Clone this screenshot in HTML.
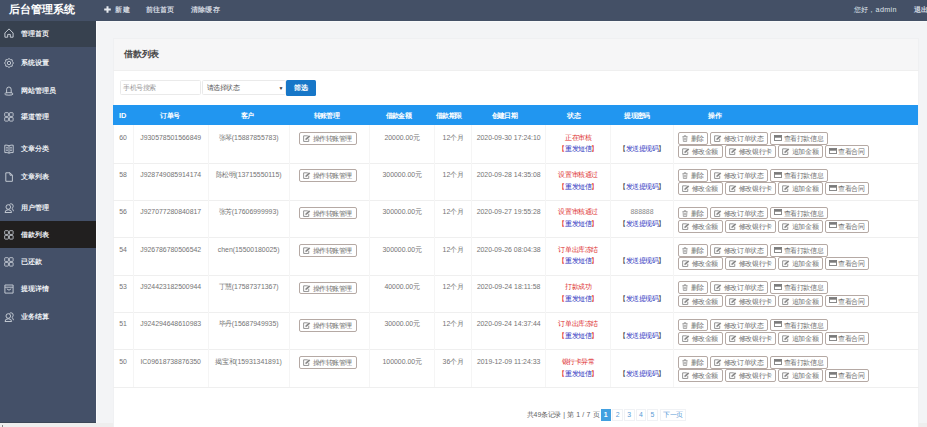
<!DOCTYPE html>
<html><head><meta charset="utf-8">
<style>
*{box-sizing:border-box;margin:0;padding:0}
html,body{width:927px;height:427px;overflow:hidden;background:#f3f4f6;font-family:"Liberation Sans",sans-serif;color:#666}
i{font-style:normal}
.a{position:absolute;white-space:nowrap}
#hd{position:absolute;left:0;top:0;width:927px;height:20.5px;background:#445066}
#title{left:9px;top:2.5px;font-size:11px;font-weight:bold;color:#fff;line-height:13px}
#title i{letter-spacing:-0.1px}
.hm{top:5.3px;font-size:7.2px;line-height:9px;color:#d3d8e0;font-weight:700}
.hm i{letter-spacing:0.2px}
#sb{position:absolute;left:0;top:20.5px;width:96px;height:402px;background:#445068}
.si{position:absolute;left:0;width:96px;height:26px}
.si .t{position:absolute;left:21px;font-size:7px;line-height:9px;color:#eef0f4;top:8.5px;font-weight:700;white-space:nowrap}
.si svg{position:absolute;left:4.4px;top:8.5px}
#bot{position:absolute;left:0;top:422.5px;width:927px;height:5px;background:#eeeeee}
#cline{position:absolute;left:96px;top:20.5px;width:1px;height:402px;background:#fbfbfc}
#tline{position:absolute;left:96px;top:20.5px;width:831px;height:1px;background:#f8f9fa}
#panel{position:absolute;left:112.8px;top:37.8px;width:806.6px;height:390px;background:#fff;border:1px solid #f0f1f3}
#ph{position:absolute;left:112.8px;top:37.8px;width:806.6px;height:33.6px;background:#f6f6f7;border:1px solid #eff0f2;border-bottom:1px solid #efefef}
#ptitle{left:124px;top:48.6px;font-size:8.8px;font-weight:bold;color:#444;line-height:11px}
.ls i{letter-spacing:-0.45px}

#ptitle i{letter-spacing:-0.2px}
.inp{position:absolute;background:#fff;border:1px solid #eaeaea;border-radius:1.5px}
#btn{position:absolute;left:286.2px;top:80.2px;width:29.4px;height:15.6px;background:#1777c8;border-radius:1.5px;color:#fff;font-weight:bold;font-size:6.8px;line-height:15.6px;text-align:center}
#btn i{letter-spacing:-0.3px}
#th{position:absolute;left:113px;top:105.2px;width:805.4px;height:19.8px;background:#2196f0}
.thx{top:110.5px;font-size:6.6px;line-height:9px;color:#fff;font-weight:bold}
.thx i{letter-spacing:-0.6px}
.rl{position:absolute;left:113px;width:806px;height:1px;background:#efefef}
.vl{position:absolute;top:125.2px;width:1px;height:261.6px;background:#f5f5f5}
.c{position:absolute;font-size:6.9px;line-height:10.8px;text-align:center;color:#747474;white-space:nowrap;font-weight:500}
.c i{letter-spacing:-0.45px}
.b1{position:absolute;height:12.6px;border:1px solid #b5a9a4;border-radius:2px;background:#fff;font-size:6.9px;line-height:11.2px;color:#707070;white-space:nowrap;padding-left:3px;font-weight:500}
.b1 i{letter-spacing:-0.45px}
.b1 svg{vertical-align:-1px;margin-right:1.5px}
.red{color:#dd2c2c}.blue{color:#2d34c0}.blk{color:#444}
#pg{left:527px;top:409.5px;font-size:6.9px;line-height:9px;color:#5e5e5e;word-spacing:0.4px}
#pg i{letter-spacing:-0.45px}
.pb{position:absolute;top:408.6px;height:12.2px;border:1px solid #f0f2f5;font-size:6.9px;line-height:10.2px;text-align:center;color:#5a9bd5}
.pb i{letter-spacing:-0.45px}
</style></head><body>
<div id="hd"></div>
<div class="a" id="title"><i>后台管理系统</i></div>
<div class="a hm" style="left:104px"><svg style="position:absolute;left:0.4px;top:0.9px" width="7" height="7" viewBox="0 0 7 7"><path d="M2.5 0.2 H4.5 V2.5 H6.8 V4.5 H4.5 V6.8 H2.5 V4.5 H0.2 V2.5 H2.5 Z" fill="#e6e9ee"/></svg><span style="margin-left:11.4px"><i>新建</i></span></div>
<div class="a hm" style="left:145.5px"><i>前往首页</i></div>
<div class="a hm" style="left:191px"><i>清除缓存</i></div>
<div class="a hm" style="left:854px;top:5px;font-weight:500;color:#dfe3ea"><i>您好，</i><span style="letter-spacing:0.3px;font-weight:400">admin</span></div>
<div class="a hm" style="left:914px;top:5.3px"><i>退出</i></div>
<div id="sb">
<div class="si" style="top:0px;height:26px;background:#37414f"><svg style="top:7px;left:4.3px" width="10" height="10" viewBox="0 0 10 10" fill="none" stroke="#d5dae2" stroke-width="0.9" stroke-linejoin="round"><path d="M0.9 5 L5 0.9 L9.1 5 V9.2 H6.3 V6.4 H3.7 V9.2 H0.9 Z"/></svg><span class="t"><i>管理首页</i></span></div>
<div class="si" style="top:29px;height:26px"><svg width="10" height="10" viewBox="0 0 10 10" fill="none" stroke="#d5dae2" stroke-width="0.85" stroke-linejoin="round"><path d="M5 0.5 L6.4 1.6 L8.2 1.8 L8.4 3.6 L9.5 5 L8.4 6.4 L8.2 8.2 L6.4 8.4 L5 9.5 L3.6 8.4 L1.8 8.2 L1.6 6.4 L0.5 5 L1.6 3.6 L1.8 1.8 L3.6 1.6 Z"/><circle cx="5" cy="5" r="1.7"/></svg><span class="t"><i>系统设置</i></span></div>
<div class="si" style="top:56.6px;height:26px"><svg width="10" height="10" viewBox="0 0 10 10" fill="none" stroke="#d5dae2" stroke-width="0.85"><path d="M2.6 6.9 V3.6 Q2.6 1 4.9 1 Q7.2 1 7.2 3.6 V6.9"/><ellipse cx="4.9" cy="7.9" rx="4.2" ry="1.3"/></svg><span class="t"><i>网站管理员</i></span></div>
<div class="si" style="top:83px;height:26px"><svg width="10" height="10" viewBox="0 0 10 10" fill="none" stroke="#d5dae2" stroke-width="0.8"><rect x="0.7" y="0.7" width="3.7" height="3.7" rx="0.6"/><rect x="5.4" y="0.7" width="3.7" height="3.7" rx="0.6"/><rect x="0.7" y="5.4" width="3.7" height="3.7" rx="0.6"/><rect x="5.4" y="5.4" width="3.7" height="3.7" rx="0.6"/></svg><span class="t"><i>渠道管理</i></span></div>
<div class="si" style="top:115px;height:26px"><svg width="10" height="10" viewBox="0 0 10 10" fill="none" stroke="#d5dae2" stroke-width="0.85" stroke-linejoin="round"><path d="M5 1.8 Q3 0.8 0.8 1.2 V8.6 Q3 8.2 5 9.2 Q7 8.2 9.2 8.6 V1.2 Q7 0.8 5 1.8 Z M5 1.8 V9.2 M2.2 3.4 H3.8 M2.2 5 H3.8 M2.2 6.6 H3.8 M6.2 3.4 H7.8 M6.2 5 H7.8 M6.2 6.6 H7.8"/></svg><span class="t"><i>文章分类</i></span></div>
<div class="si" style="top:142.8px;height:26px"><svg width="10" height="10" viewBox="0 0 10 10" fill="none" stroke="#d5dae2" stroke-width="0.85" stroke-linejoin="round"><path d="M1.8 0.8 H6 L8.4 3.2 V9.3 H1.8 Z M6 0.8 V3.2 H8.4"/></svg><span class="t"><i>文章列表</i></span></div>
<div class="si" style="top:174.2px;height:26px"><svg width="10" height="10" viewBox="0 0 10 10" fill="none" stroke="#d5dae2" stroke-width="0.85"><circle cx="4.3" cy="4" r="2.3"/><path d="M1 9.5 Q1 6.8 4.3 6.8 Q7.6 6.8 7.6 9.5 Z M5.6 1.4 Q6.2 0.8 7.1 0.8 Q9.2 0.9 9.2 3.2 Q9.2 4.8 7.8 5.5 Q9.4 6.2 9.4 8.2"/></svg><span class="t"><i>用户管理</i></span></div>
<div class="si" style="top:200.9px;height:26.6px;background:#211f1f"><svg width="10" height="10" viewBox="0 0 10 10" fill="none" stroke="#d5dae2" stroke-width="0.8"><rect x="0.7" y="0.7" width="3.7" height="3.7" rx="0.6"/><rect x="5.4" y="0.7" width="3.7" height="3.7" rx="0.6"/><rect x="0.7" y="5.4" width="3.7" height="3.7" rx="0.6"/><rect x="5.4" y="5.4" width="3.7" height="3.7" rx="0.6"/></svg><span class="t"><i>借款列表</i></span></div>
<div class="si" style="top:228px;height:26px"><svg width="10" height="10" viewBox="0 0 10 10" fill="none" stroke="#d5dae2" stroke-width="0.8"><rect x="0.7" y="0.7" width="3.7" height="3.7" rx="0.6"/><rect x="5.4" y="0.7" width="3.7" height="3.7" rx="0.6"/><rect x="0.7" y="5.4" width="3.7" height="3.7" rx="0.6"/><rect x="5.4" y="5.4" width="3.7" height="3.7" rx="0.6"/></svg><span class="t"><i>已还款</i></span></div>
<div class="si" style="top:255px;height:26px"><svg width="10" height="10" viewBox="0 0 10 10" fill="none" stroke="#d5dae2" stroke-width="0.85"><path d="M0.9 1 H9.1 V9.1 H0.9 Z M0.9 3.2 H9.1 M2.8 4.8 Q5 7.6 7.2 4.8"/></svg><span class="t"><i>提现详情</i></span></div>
<div class="si" style="top:283px;height:26px"><svg width="10" height="10" viewBox="0 0 10 10" fill="none" stroke="#d5dae2" stroke-width="0.85"><circle cx="4.3" cy="4" r="2.3"/><path d="M1 9.5 Q1 6.8 4.3 6.8 Q7.6 6.8 7.6 9.5 Z M5.6 1.4 Q6.2 0.8 7.1 0.8 Q9.2 0.9 9.2 3.2 Q9.2 4.8 7.8 5.5 Q9.4 6.2 9.4 8.2"/></svg><span class="t"><i>业务结算</i></span></div>
</div>
<div id="tline"></div><div id="cline"></div><div id="bot"></div><div style="position:absolute;left:2px;top:425px;width:1.2px;height:2px;background:#8a8a8a"></div><div style="position:absolute;left:0;top:421.8px;width:96px;height:0.8px;background:#3b4656"></div>
<div id="panel"></div><div id="ph"></div>
<div class="a" id="ptitle"><i>借款列表</i></div>
<div class="inp" style="left:120.2px;top:80.3px;width:81.3px;height:14.4px"></div>
<div class="a ls" style="left:123px;top:83.2px;font-size:6.9px;line-height:9px;color:#9a9a9a;font-weight:500"><i>手机号搜索</i></div>
<div class="inp" style="left:201.5px;top:80.3px;width:84.4px;height:14.4px"></div>
<div class="a ls" style="left:206.5px;top:83.2px;font-size:6.9px;line-height:9px;color:#555;font-weight:500"><i>请选择状态</i></div>
<div class="a" style="left:278.6px;top:83.5px;font-size:5px;line-height:8px;color:#333">▼</div>
<div id="btn"><i>筛选</i></div>
<div id="th"></div>
<div class="a thx" style="left:119px"><span style="font-size:7.4px">ID</span></div>
<div class="a thx" style="left:160.2px"><i>订单号</i></div>
<div class="a thx" style="left:240.7px"><i>客户</i></div>
<div class="a thx" style="left:313.6px"><i>转账管理</i></div>
<div class="a thx" style="left:385.7px"><i>借款金额</i></div>
<div class="a thx" style="left:436px"><i>借款期限</i></div>
<div class="a thx" style="left:491.5px"><i>创建日期</i></div>
<div class="a thx" style="left:567.3px"><i>状态</i></div>
<div class="a thx" style="left:624.2px"><i>提现密码</i></div>
<div class="a thx" style="left:708.4px"><i>操作</i></div>
<div class="rl" style="top:162.57px"></div>
<div class="c" style="left:113px;width:20.1px;top:132.50px">60</div>
<div class="c" style="left:133.1px;width:75.2px;top:132.50px">J930578501566849</div>
<div class="c" style="left:208.3px;width:80.7px;top:132.50px"><i>张琴</i>(15887855783)</div>
<div class="c" style="left:369.6px;width:65.0px;top:132.50px">20000.00<i>元</i></div>
<div class="c" style="left:434.6px;width:36.8px;top:132.50px">12<i>个月</i></div>
<div class="c" style="left:471.4px;width:74.5px;top:132.50px">2020-09-30 17:24:10</div>
<div class="b1" style="left:299.2px;top:132.10px;width:57.6px"><svg width="8" height="7" viewBox="0 0 11.4 10"><path d="M6.8 1.2 H0.9 V9.2 H8.2 V5.4" fill="none" stroke="#8a8a8a" stroke-width="1.3"/><path d="M3.3 7 L3.7 5.1 L8.6 0.4 L10.4 2.1 L5.4 6.7 Z" fill="#8a8a8a"/></svg><i>操作转账管理</i></div>
<div class="c red" style="left:545.9px;width:64.5px;top:132.50px"><i>正在审核</i></div>
<div class="c" style="left:545.9px;width:64.5px;top:144.30px"><span class="red"><i>【</i></span><span class="blue"><i>重发短信</i></span><span class="red"><i>】</i></span></div>
<div class="c" style="left:610.4px;width:63.2px;top:144.30px"><span class="blk"><i>【</i></span><span class="blue"><i>发送提现码</i></span><span class="blk"><i>】</i></span></div>
<div class="b1" style="left:678.2px;top:132.00px;width:29.8px"><svg style="margin-right:2.6px" width="6" height="7" viewBox="0 0 8 10"><path d="M0.4 2.3 H7.6 M2.9 2.3 V0.9 H5.1 V2.3 M1.2 2.3 L1.7 9.3 H6.3 L6.8 2.3 M3 4.1 V7.8 M5 4.1 V7.8" fill="none" stroke="#8a8a8a" stroke-width="1"/></svg><i>删除</i></div>
<div class="b1" style="left:710.4px;top:132.00px;width:57.4px"><svg width="8" height="7" viewBox="0 0 11.4 10"><path d="M6.8 1.2 H0.9 V9.2 H8.2 V5.4" fill="none" stroke="#8a8a8a" stroke-width="1.3"/><path d="M3.3 7 L3.7 5.1 L8.6 0.4 L10.4 2.1 L5.4 6.7 Z" fill="#8a8a8a"/></svg><i>修改订单状态</i></div>
<div class="b1" style="left:770.3px;top:132.00px;width:57.8px"><svg style="vertical-align:0.4px" width="8" height="6" viewBox="0 0 11 8"><rect x="0.6" y="0.6" width="9.8" height="6.8" fill="none" stroke="#7a7a7a" stroke-width="1.2"/><rect x="0.6" y="0.6" width="9.8" height="3" fill="#7a7a7a"/></svg><i>查看打款信息</i></div>
<div class="b1" style="left:678.2px;top:145.10px;width:44.7px;height:12.8px"><svg width="8" height="7" viewBox="0 0 11.4 10"><path d="M6.8 1.2 H0.9 V9.2 H8.2 V5.4" fill="none" stroke="#8a8a8a" stroke-width="1.3"/><path d="M3.3 7 L3.7 5.1 L8.6 0.4 L10.4 2.1 L5.4 6.7 Z" fill="#8a8a8a"/></svg><i>修改金额</i></div>
<div class="b1" style="left:725.4px;top:145.10px;width:50.2px;height:12.8px"><svg width="8" height="7" viewBox="0 0 11.4 10"><path d="M6.8 1.2 H0.9 V9.2 H8.2 V5.4" fill="none" stroke="#8a8a8a" stroke-width="1.3"/><path d="M3.3 7 L3.7 5.1 L8.6 0.4 L10.4 2.1 L5.4 6.7 Z" fill="#8a8a8a"/></svg><i>修改银行卡</i></div>
<div class="b1" style="left:778.4px;top:145.10px;width:44.6px;height:12.8px"><svg width="8" height="7" viewBox="0 0 11.4 10"><path d="M6.8 1.2 H0.9 V9.2 H8.2 V5.4" fill="none" stroke="#8a8a8a" stroke-width="1.3"/><path d="M3.3 7 L3.7 5.1 L8.6 0.4 L10.4 2.1 L5.4 6.7 Z" fill="#8a8a8a"/></svg><i>追加金额</i></div>
<div class="b1" style="left:824.9px;top:145.10px;width:43.7px;height:12.8px"><svg style="vertical-align:0.4px" width="8" height="6" viewBox="0 0 11 8"><rect x="0.6" y="0.6" width="9.8" height="6.8" fill="none" stroke="#7a7a7a" stroke-width="1.2"/><rect x="0.6" y="0.6" width="9.8" height="3" fill="#7a7a7a"/></svg><i>查看合同</i></div>
<div class="rl" style="top:199.94px"></div>
<div class="c" style="left:113px;width:20.1px;top:169.87px">58</div>
<div class="c" style="left:133.1px;width:75.2px;top:169.87px">J928749085914174</div>
<div class="c" style="left:208.3px;width:80.7px;top:169.87px"><i>陈松明</i>(13715550115)</div>
<div class="c" style="left:369.6px;width:65.0px;top:169.87px">300000.00<i>元</i></div>
<div class="c" style="left:434.6px;width:36.8px;top:169.87px">12<i>个月</i></div>
<div class="c" style="left:471.4px;width:74.5px;top:169.87px">2020-09-28 14:35:08</div>
<div class="b1" style="left:299.2px;top:169.47px;width:57.6px"><svg width="8" height="7" viewBox="0 0 11.4 10"><path d="M6.8 1.2 H0.9 V9.2 H8.2 V5.4" fill="none" stroke="#8a8a8a" stroke-width="1.3"/><path d="M3.3 7 L3.7 5.1 L8.6 0.4 L10.4 2.1 L5.4 6.7 Z" fill="#8a8a8a"/></svg><i>操作转账管理</i></div>
<div class="c red" style="left:545.9px;width:64.5px;top:169.87px"><i>设置审核通过</i></div>
<div class="c" style="left:545.9px;width:64.5px;top:181.67px"><span class="red"><i>【</i></span><span class="blue"><i>重发短信</i></span><span class="red"><i>】</i></span></div>
<div class="c" style="left:610.4px;width:63.2px;top:181.67px"><span class="blk"><i>【</i></span><span class="blue"><i>发送提现码</i></span><span class="blk"><i>】</i></span></div>
<div class="b1" style="left:678.2px;top:169.37px;width:29.8px"><svg style="margin-right:2.6px" width="6" height="7" viewBox="0 0 8 10"><path d="M0.4 2.3 H7.6 M2.9 2.3 V0.9 H5.1 V2.3 M1.2 2.3 L1.7 9.3 H6.3 L6.8 2.3 M3 4.1 V7.8 M5 4.1 V7.8" fill="none" stroke="#8a8a8a" stroke-width="1"/></svg><i>删除</i></div>
<div class="b1" style="left:710.4px;top:169.37px;width:57.4px"><svg width="8" height="7" viewBox="0 0 11.4 10"><path d="M6.8 1.2 H0.9 V9.2 H8.2 V5.4" fill="none" stroke="#8a8a8a" stroke-width="1.3"/><path d="M3.3 7 L3.7 5.1 L8.6 0.4 L10.4 2.1 L5.4 6.7 Z" fill="#8a8a8a"/></svg><i>修改订单状态</i></div>
<div class="b1" style="left:770.3px;top:169.37px;width:57.8px"><svg style="vertical-align:0.4px" width="8" height="6" viewBox="0 0 11 8"><rect x="0.6" y="0.6" width="9.8" height="6.8" fill="none" stroke="#7a7a7a" stroke-width="1.2"/><rect x="0.6" y="0.6" width="9.8" height="3" fill="#7a7a7a"/></svg><i>查看打款信息</i></div>
<div class="b1" style="left:678.2px;top:182.47px;width:44.7px;height:12.8px"><svg width="8" height="7" viewBox="0 0 11.4 10"><path d="M6.8 1.2 H0.9 V9.2 H8.2 V5.4" fill="none" stroke="#8a8a8a" stroke-width="1.3"/><path d="M3.3 7 L3.7 5.1 L8.6 0.4 L10.4 2.1 L5.4 6.7 Z" fill="#8a8a8a"/></svg><i>修改金额</i></div>
<div class="b1" style="left:725.4px;top:182.47px;width:50.2px;height:12.8px"><svg width="8" height="7" viewBox="0 0 11.4 10"><path d="M6.8 1.2 H0.9 V9.2 H8.2 V5.4" fill="none" stroke="#8a8a8a" stroke-width="1.3"/><path d="M3.3 7 L3.7 5.1 L8.6 0.4 L10.4 2.1 L5.4 6.7 Z" fill="#8a8a8a"/></svg><i>修改银行卡</i></div>
<div class="b1" style="left:778.4px;top:182.47px;width:44.6px;height:12.8px"><svg width="8" height="7" viewBox="0 0 11.4 10"><path d="M6.8 1.2 H0.9 V9.2 H8.2 V5.4" fill="none" stroke="#8a8a8a" stroke-width="1.3"/><path d="M3.3 7 L3.7 5.1 L8.6 0.4 L10.4 2.1 L5.4 6.7 Z" fill="#8a8a8a"/></svg><i>追加金额</i></div>
<div class="b1" style="left:824.9px;top:182.47px;width:43.7px;height:12.8px"><svg style="vertical-align:0.4px" width="8" height="6" viewBox="0 0 11 8"><rect x="0.6" y="0.6" width="9.8" height="6.8" fill="none" stroke="#7a7a7a" stroke-width="1.2"/><rect x="0.6" y="0.6" width="9.8" height="3" fill="#7a7a7a"/></svg><i>查看合同</i></div>
<div class="rl" style="top:237.31px"></div>
<div class="c" style="left:113px;width:20.1px;top:207.24px">56</div>
<div class="c" style="left:133.1px;width:75.2px;top:207.24px">J927077280840817</div>
<div class="c" style="left:208.3px;width:80.7px;top:207.24px"><i>张芳</i>(17606999993)</div>
<div class="c" style="left:369.6px;width:65.0px;top:207.24px">300000.00<i>元</i></div>
<div class="c" style="left:434.6px;width:36.8px;top:207.24px">12<i>个月</i></div>
<div class="c" style="left:471.4px;width:74.5px;top:207.24px">2020-09-27 19:55:28</div>
<div class="b1" style="left:299.2px;top:206.84px;width:57.6px"><svg width="8" height="7" viewBox="0 0 11.4 10"><path d="M6.8 1.2 H0.9 V9.2 H8.2 V5.4" fill="none" stroke="#8a8a8a" stroke-width="1.3"/><path d="M3.3 7 L3.7 5.1 L8.6 0.4 L10.4 2.1 L5.4 6.7 Z" fill="#8a8a8a"/></svg><i>操作转账管理</i></div>
<div class="c red" style="left:545.9px;width:64.5px;top:207.24px"><i>设置审核通过</i></div>
<div class="c" style="left:545.9px;width:64.5px;top:219.04px"><span class="red"><i>【</i></span><span class="blue"><i>重发短信</i></span><span class="red"><i>】</i></span></div>
<div class="c" style="left:610.4px;width:63.2px;top:207.24px;color:#888">888888</div>
<div class="c" style="left:610.4px;width:63.2px;top:219.04px"><span class="blk"><i>【</i></span><span class="blue"><i>发送提现码</i></span><span class="blk"><i>】</i></span></div>
<div class="b1" style="left:678.2px;top:206.74px;width:29.8px"><svg style="margin-right:2.6px" width="6" height="7" viewBox="0 0 8 10"><path d="M0.4 2.3 H7.6 M2.9 2.3 V0.9 H5.1 V2.3 M1.2 2.3 L1.7 9.3 H6.3 L6.8 2.3 M3 4.1 V7.8 M5 4.1 V7.8" fill="none" stroke="#8a8a8a" stroke-width="1"/></svg><i>删除</i></div>
<div class="b1" style="left:710.4px;top:206.74px;width:57.4px"><svg width="8" height="7" viewBox="0 0 11.4 10"><path d="M6.8 1.2 H0.9 V9.2 H8.2 V5.4" fill="none" stroke="#8a8a8a" stroke-width="1.3"/><path d="M3.3 7 L3.7 5.1 L8.6 0.4 L10.4 2.1 L5.4 6.7 Z" fill="#8a8a8a"/></svg><i>修改订单状态</i></div>
<div class="b1" style="left:770.3px;top:206.74px;width:57.8px"><svg style="vertical-align:0.4px" width="8" height="6" viewBox="0 0 11 8"><rect x="0.6" y="0.6" width="9.8" height="6.8" fill="none" stroke="#7a7a7a" stroke-width="1.2"/><rect x="0.6" y="0.6" width="9.8" height="3" fill="#7a7a7a"/></svg><i>查看打款信息</i></div>
<div class="b1" style="left:678.2px;top:219.84px;width:44.7px;height:12.8px"><svg width="8" height="7" viewBox="0 0 11.4 10"><path d="M6.8 1.2 H0.9 V9.2 H8.2 V5.4" fill="none" stroke="#8a8a8a" stroke-width="1.3"/><path d="M3.3 7 L3.7 5.1 L8.6 0.4 L10.4 2.1 L5.4 6.7 Z" fill="#8a8a8a"/></svg><i>修改金额</i></div>
<div class="b1" style="left:725.4px;top:219.84px;width:50.2px;height:12.8px"><svg width="8" height="7" viewBox="0 0 11.4 10"><path d="M6.8 1.2 H0.9 V9.2 H8.2 V5.4" fill="none" stroke="#8a8a8a" stroke-width="1.3"/><path d="M3.3 7 L3.7 5.1 L8.6 0.4 L10.4 2.1 L5.4 6.7 Z" fill="#8a8a8a"/></svg><i>修改银行卡</i></div>
<div class="b1" style="left:778.4px;top:219.84px;width:44.6px;height:12.8px"><svg width="8" height="7" viewBox="0 0 11.4 10"><path d="M6.8 1.2 H0.9 V9.2 H8.2 V5.4" fill="none" stroke="#8a8a8a" stroke-width="1.3"/><path d="M3.3 7 L3.7 5.1 L8.6 0.4 L10.4 2.1 L5.4 6.7 Z" fill="#8a8a8a"/></svg><i>追加金额</i></div>
<div class="b1" style="left:824.9px;top:219.84px;width:43.7px;height:12.8px"><svg style="vertical-align:0.4px" width="8" height="6" viewBox="0 0 11 8"><rect x="0.6" y="0.6" width="9.8" height="6.8" fill="none" stroke="#7a7a7a" stroke-width="1.2"/><rect x="0.6" y="0.6" width="9.8" height="3" fill="#7a7a7a"/></svg><i>查看合同</i></div>
<div class="rl" style="top:274.68px"></div>
<div class="c" style="left:113px;width:20.1px;top:244.61px">54</div>
<div class="c" style="left:133.1px;width:75.2px;top:244.61px">J926786780506542</div>
<div class="c" style="left:208.3px;width:80.7px;top:244.61px">chen(15500180025)</div>
<div class="c" style="left:369.6px;width:65.0px;top:244.61px">300000.00<i>元</i></div>
<div class="c" style="left:434.6px;width:36.8px;top:244.61px">12<i>个月</i></div>
<div class="c" style="left:471.4px;width:74.5px;top:244.61px">2020-09-26 08:04:38</div>
<div class="b1" style="left:299.2px;top:244.21px;width:57.6px"><svg width="8" height="7" viewBox="0 0 11.4 10"><path d="M6.8 1.2 H0.9 V9.2 H8.2 V5.4" fill="none" stroke="#8a8a8a" stroke-width="1.3"/><path d="M3.3 7 L3.7 5.1 L8.6 0.4 L10.4 2.1 L5.4 6.7 Z" fill="#8a8a8a"/></svg><i>操作转账管理</i></div>
<div class="c red" style="left:545.9px;width:64.5px;top:244.61px"><i>订单出库冻结</i></div>
<div class="c" style="left:545.9px;width:64.5px;top:256.41px"><span class="red"><i>【</i></span><span class="blue"><i>重发短信</i></span><span class="red"><i>】</i></span></div>
<div class="c" style="left:610.4px;width:63.2px;top:256.41px"><span class="blk"><i>【</i></span><span class="blue"><i>发送提现码</i></span><span class="blk"><i>】</i></span></div>
<div class="b1" style="left:678.2px;top:244.11px;width:29.8px"><svg style="margin-right:2.6px" width="6" height="7" viewBox="0 0 8 10"><path d="M0.4 2.3 H7.6 M2.9 2.3 V0.9 H5.1 V2.3 M1.2 2.3 L1.7 9.3 H6.3 L6.8 2.3 M3 4.1 V7.8 M5 4.1 V7.8" fill="none" stroke="#8a8a8a" stroke-width="1"/></svg><i>删除</i></div>
<div class="b1" style="left:710.4px;top:244.11px;width:57.4px"><svg width="8" height="7" viewBox="0 0 11.4 10"><path d="M6.8 1.2 H0.9 V9.2 H8.2 V5.4" fill="none" stroke="#8a8a8a" stroke-width="1.3"/><path d="M3.3 7 L3.7 5.1 L8.6 0.4 L10.4 2.1 L5.4 6.7 Z" fill="#8a8a8a"/></svg><i>修改订单状态</i></div>
<div class="b1" style="left:770.3px;top:244.11px;width:57.8px"><svg style="vertical-align:0.4px" width="8" height="6" viewBox="0 0 11 8"><rect x="0.6" y="0.6" width="9.8" height="6.8" fill="none" stroke="#7a7a7a" stroke-width="1.2"/><rect x="0.6" y="0.6" width="9.8" height="3" fill="#7a7a7a"/></svg><i>查看打款信息</i></div>
<div class="b1" style="left:678.2px;top:257.21px;width:44.7px;height:12.8px"><svg width="8" height="7" viewBox="0 0 11.4 10"><path d="M6.8 1.2 H0.9 V9.2 H8.2 V5.4" fill="none" stroke="#8a8a8a" stroke-width="1.3"/><path d="M3.3 7 L3.7 5.1 L8.6 0.4 L10.4 2.1 L5.4 6.7 Z" fill="#8a8a8a"/></svg><i>修改金额</i></div>
<div class="b1" style="left:725.4px;top:257.21px;width:50.2px;height:12.8px"><svg width="8" height="7" viewBox="0 0 11.4 10"><path d="M6.8 1.2 H0.9 V9.2 H8.2 V5.4" fill="none" stroke="#8a8a8a" stroke-width="1.3"/><path d="M3.3 7 L3.7 5.1 L8.6 0.4 L10.4 2.1 L5.4 6.7 Z" fill="#8a8a8a"/></svg><i>修改银行卡</i></div>
<div class="b1" style="left:778.4px;top:257.21px;width:44.6px;height:12.8px"><svg width="8" height="7" viewBox="0 0 11.4 10"><path d="M6.8 1.2 H0.9 V9.2 H8.2 V5.4" fill="none" stroke="#8a8a8a" stroke-width="1.3"/><path d="M3.3 7 L3.7 5.1 L8.6 0.4 L10.4 2.1 L5.4 6.7 Z" fill="#8a8a8a"/></svg><i>追加金额</i></div>
<div class="b1" style="left:824.9px;top:257.21px;width:43.7px;height:12.8px"><svg style="vertical-align:0.4px" width="8" height="6" viewBox="0 0 11 8"><rect x="0.6" y="0.6" width="9.8" height="6.8" fill="none" stroke="#7a7a7a" stroke-width="1.2"/><rect x="0.6" y="0.6" width="9.8" height="3" fill="#7a7a7a"/></svg><i>查看合同</i></div>
<div class="rl" style="top:312.05px"></div>
<div class="c" style="left:113px;width:20.1px;top:281.98px">53</div>
<div class="c" style="left:133.1px;width:75.2px;top:281.98px">J924423182500944</div>
<div class="c" style="left:208.3px;width:80.7px;top:281.98px"><i>丁慧</i>(17587371367)</div>
<div class="c" style="left:369.6px;width:65.0px;top:281.98px">40000.00<i>元</i></div>
<div class="c" style="left:434.6px;width:36.8px;top:281.98px">12<i>个月</i></div>
<div class="c" style="left:471.4px;width:74.5px;top:281.98px">2020-09-24 18:11:58</div>
<div class="b1" style="left:299.2px;top:281.58px;width:57.6px"><svg width="8" height="7" viewBox="0 0 11.4 10"><path d="M6.8 1.2 H0.9 V9.2 H8.2 V5.4" fill="none" stroke="#8a8a8a" stroke-width="1.3"/><path d="M3.3 7 L3.7 5.1 L8.6 0.4 L10.4 2.1 L5.4 6.7 Z" fill="#8a8a8a"/></svg><i>操作转账管理</i></div>
<div class="c red" style="left:545.9px;width:64.5px;top:281.98px"><i>打款成功</i></div>
<div class="c" style="left:545.9px;width:64.5px;top:293.78px"><span class="red"><i>【</i></span><span class="blue"><i>重发短信</i></span><span class="red"><i>】</i></span></div>
<div class="c" style="left:610.4px;width:63.2px;top:293.78px"><span class="blk"><i>【</i></span><span class="blue"><i>发送提现码</i></span><span class="blk"><i>】</i></span></div>
<div class="b1" style="left:678.2px;top:281.48px;width:29.8px"><svg style="margin-right:2.6px" width="6" height="7" viewBox="0 0 8 10"><path d="M0.4 2.3 H7.6 M2.9 2.3 V0.9 H5.1 V2.3 M1.2 2.3 L1.7 9.3 H6.3 L6.8 2.3 M3 4.1 V7.8 M5 4.1 V7.8" fill="none" stroke="#8a8a8a" stroke-width="1"/></svg><i>删除</i></div>
<div class="b1" style="left:710.4px;top:281.48px;width:57.4px"><svg width="8" height="7" viewBox="0 0 11.4 10"><path d="M6.8 1.2 H0.9 V9.2 H8.2 V5.4" fill="none" stroke="#8a8a8a" stroke-width="1.3"/><path d="M3.3 7 L3.7 5.1 L8.6 0.4 L10.4 2.1 L5.4 6.7 Z" fill="#8a8a8a"/></svg><i>修改订单状态</i></div>
<div class="b1" style="left:770.3px;top:281.48px;width:57.8px"><svg style="vertical-align:0.4px" width="8" height="6" viewBox="0 0 11 8"><rect x="0.6" y="0.6" width="9.8" height="6.8" fill="none" stroke="#7a7a7a" stroke-width="1.2"/><rect x="0.6" y="0.6" width="9.8" height="3" fill="#7a7a7a"/></svg><i>查看打款信息</i></div>
<div class="b1" style="left:678.2px;top:294.58px;width:44.7px;height:12.8px"><svg width="8" height="7" viewBox="0 0 11.4 10"><path d="M6.8 1.2 H0.9 V9.2 H8.2 V5.4" fill="none" stroke="#8a8a8a" stroke-width="1.3"/><path d="M3.3 7 L3.7 5.1 L8.6 0.4 L10.4 2.1 L5.4 6.7 Z" fill="#8a8a8a"/></svg><i>修改金额</i></div>
<div class="b1" style="left:725.4px;top:294.58px;width:50.2px;height:12.8px"><svg width="8" height="7" viewBox="0 0 11.4 10"><path d="M6.8 1.2 H0.9 V9.2 H8.2 V5.4" fill="none" stroke="#8a8a8a" stroke-width="1.3"/><path d="M3.3 7 L3.7 5.1 L8.6 0.4 L10.4 2.1 L5.4 6.7 Z" fill="#8a8a8a"/></svg><i>修改银行卡</i></div>
<div class="b1" style="left:778.4px;top:294.58px;width:44.6px;height:12.8px"><svg width="8" height="7" viewBox="0 0 11.4 10"><path d="M6.8 1.2 H0.9 V9.2 H8.2 V5.4" fill="none" stroke="#8a8a8a" stroke-width="1.3"/><path d="M3.3 7 L3.7 5.1 L8.6 0.4 L10.4 2.1 L5.4 6.7 Z" fill="#8a8a8a"/></svg><i>追加金额</i></div>
<div class="b1" style="left:824.9px;top:294.58px;width:43.7px;height:12.8px"><svg style="vertical-align:0.4px" width="8" height="6" viewBox="0 0 11 8"><rect x="0.6" y="0.6" width="9.8" height="6.8" fill="none" stroke="#7a7a7a" stroke-width="1.2"/><rect x="0.6" y="0.6" width="9.8" height="3" fill="#7a7a7a"/></svg><i>查看合同</i></div>
<div class="rl" style="top:349.42px"></div>
<div class="c" style="left:113px;width:20.1px;top:319.35px">51</div>
<div class="c" style="left:133.1px;width:75.2px;top:319.35px">J924294648610983</div>
<div class="c" style="left:208.3px;width:80.7px;top:319.35px"><i>毕丹</i>(15687949935)</div>
<div class="c" style="left:369.6px;width:65.0px;top:319.35px">30000.00<i>元</i></div>
<div class="c" style="left:434.6px;width:36.8px;top:319.35px">12<i>个月</i></div>
<div class="c" style="left:471.4px;width:74.5px;top:319.35px">2020-09-24 14:37:44</div>
<div class="b1" style="left:299.2px;top:318.95px;width:57.6px"><svg width="8" height="7" viewBox="0 0 11.4 10"><path d="M6.8 1.2 H0.9 V9.2 H8.2 V5.4" fill="none" stroke="#8a8a8a" stroke-width="1.3"/><path d="M3.3 7 L3.7 5.1 L8.6 0.4 L10.4 2.1 L5.4 6.7 Z" fill="#8a8a8a"/></svg><i>操作转账管理</i></div>
<div class="c red" style="left:545.9px;width:64.5px;top:319.35px"><i>订单出库冻结</i></div>
<div class="c" style="left:545.9px;width:64.5px;top:331.15px"><span class="red"><i>【</i></span><span class="blue"><i>重发短信</i></span><span class="red"><i>】</i></span></div>
<div class="c" style="left:610.4px;width:63.2px;top:331.15px"><span class="blk"><i>【</i></span><span class="blue"><i>发送提现码</i></span><span class="blk"><i>】</i></span></div>
<div class="b1" style="left:678.2px;top:318.85px;width:29.8px"><svg style="margin-right:2.6px" width="6" height="7" viewBox="0 0 8 10"><path d="M0.4 2.3 H7.6 M2.9 2.3 V0.9 H5.1 V2.3 M1.2 2.3 L1.7 9.3 H6.3 L6.8 2.3 M3 4.1 V7.8 M5 4.1 V7.8" fill="none" stroke="#8a8a8a" stroke-width="1"/></svg><i>删除</i></div>
<div class="b1" style="left:710.4px;top:318.85px;width:57.4px"><svg width="8" height="7" viewBox="0 0 11.4 10"><path d="M6.8 1.2 H0.9 V9.2 H8.2 V5.4" fill="none" stroke="#8a8a8a" stroke-width="1.3"/><path d="M3.3 7 L3.7 5.1 L8.6 0.4 L10.4 2.1 L5.4 6.7 Z" fill="#8a8a8a"/></svg><i>修改订单状态</i></div>
<div class="b1" style="left:770.3px;top:318.85px;width:57.8px"><svg style="vertical-align:0.4px" width="8" height="6" viewBox="0 0 11 8"><rect x="0.6" y="0.6" width="9.8" height="6.8" fill="none" stroke="#7a7a7a" stroke-width="1.2"/><rect x="0.6" y="0.6" width="9.8" height="3" fill="#7a7a7a"/></svg><i>查看打款信息</i></div>
<div class="b1" style="left:678.2px;top:331.95px;width:44.7px;height:12.8px"><svg width="8" height="7" viewBox="0 0 11.4 10"><path d="M6.8 1.2 H0.9 V9.2 H8.2 V5.4" fill="none" stroke="#8a8a8a" stroke-width="1.3"/><path d="M3.3 7 L3.7 5.1 L8.6 0.4 L10.4 2.1 L5.4 6.7 Z" fill="#8a8a8a"/></svg><i>修改金额</i></div>
<div class="b1" style="left:725.4px;top:331.95px;width:50.2px;height:12.8px"><svg width="8" height="7" viewBox="0 0 11.4 10"><path d="M6.8 1.2 H0.9 V9.2 H8.2 V5.4" fill="none" stroke="#8a8a8a" stroke-width="1.3"/><path d="M3.3 7 L3.7 5.1 L8.6 0.4 L10.4 2.1 L5.4 6.7 Z" fill="#8a8a8a"/></svg><i>修改银行卡</i></div>
<div class="b1" style="left:778.4px;top:331.95px;width:44.6px;height:12.8px"><svg width="8" height="7" viewBox="0 0 11.4 10"><path d="M6.8 1.2 H0.9 V9.2 H8.2 V5.4" fill="none" stroke="#8a8a8a" stroke-width="1.3"/><path d="M3.3 7 L3.7 5.1 L8.6 0.4 L10.4 2.1 L5.4 6.7 Z" fill="#8a8a8a"/></svg><i>追加金额</i></div>
<div class="b1" style="left:824.9px;top:331.95px;width:43.7px;height:12.8px"><svg style="vertical-align:0.4px" width="8" height="6" viewBox="0 0 11 8"><rect x="0.6" y="0.6" width="9.8" height="6.8" fill="none" stroke="#7a7a7a" stroke-width="1.2"/><rect x="0.6" y="0.6" width="9.8" height="3" fill="#7a7a7a"/></svg><i>查看合同</i></div>
<div class="rl" style="top:386.79px"></div>
<div class="c" style="left:113px;width:20.1px;top:356.72px">50</div>
<div class="c" style="left:133.1px;width:75.2px;top:356.72px">IC09618738876350</div>
<div class="c" style="left:208.3px;width:80.7px;top:356.72px"><i>揭宝和</i>(15931341891)</div>
<div class="c" style="left:369.6px;width:65.0px;top:356.72px">100000.00<i>元</i></div>
<div class="c" style="left:434.6px;width:36.8px;top:356.72px">36<i>个月</i></div>
<div class="c" style="left:471.4px;width:74.5px;top:356.72px">2019-12-09 11:24:33</div>
<div class="b1" style="left:299.2px;top:356.32px;width:57.6px"><svg width="8" height="7" viewBox="0 0 11.4 10"><path d="M6.8 1.2 H0.9 V9.2 H8.2 V5.4" fill="none" stroke="#8a8a8a" stroke-width="1.3"/><path d="M3.3 7 L3.7 5.1 L8.6 0.4 L10.4 2.1 L5.4 6.7 Z" fill="#8a8a8a"/></svg><i>操作转账管理</i></div>
<div class="c red" style="left:545.9px;width:64.5px;top:356.72px"><i>银行卡异常</i></div>
<div class="c" style="left:545.9px;width:64.5px;top:368.52px"><span class="red"><i>【</i></span><span class="blue"><i>重发短信</i></span><span class="red"><i>】</i></span></div>
<div class="c" style="left:610.4px;width:63.2px;top:368.52px"><span class="blk"><i>【</i></span><span class="blue"><i>发送提现码</i></span><span class="blk"><i>】</i></span></div>
<div class="b1" style="left:678.2px;top:356.22px;width:29.8px"><svg style="margin-right:2.6px" width="6" height="7" viewBox="0 0 8 10"><path d="M0.4 2.3 H7.6 M2.9 2.3 V0.9 H5.1 V2.3 M1.2 2.3 L1.7 9.3 H6.3 L6.8 2.3 M3 4.1 V7.8 M5 4.1 V7.8" fill="none" stroke="#8a8a8a" stroke-width="1"/></svg><i>删除</i></div>
<div class="b1" style="left:710.4px;top:356.22px;width:57.4px"><svg width="8" height="7" viewBox="0 0 11.4 10"><path d="M6.8 1.2 H0.9 V9.2 H8.2 V5.4" fill="none" stroke="#8a8a8a" stroke-width="1.3"/><path d="M3.3 7 L3.7 5.1 L8.6 0.4 L10.4 2.1 L5.4 6.7 Z" fill="#8a8a8a"/></svg><i>修改订单状态</i></div>
<div class="b1" style="left:770.3px;top:356.22px;width:57.8px"><svg style="vertical-align:0.4px" width="8" height="6" viewBox="0 0 11 8"><rect x="0.6" y="0.6" width="9.8" height="6.8" fill="none" stroke="#7a7a7a" stroke-width="1.2"/><rect x="0.6" y="0.6" width="9.8" height="3" fill="#7a7a7a"/></svg><i>查看打款信息</i></div>
<div class="b1" style="left:678.2px;top:369.32px;width:44.7px;height:12.8px"><svg width="8" height="7" viewBox="0 0 11.4 10"><path d="M6.8 1.2 H0.9 V9.2 H8.2 V5.4" fill="none" stroke="#8a8a8a" stroke-width="1.3"/><path d="M3.3 7 L3.7 5.1 L8.6 0.4 L10.4 2.1 L5.4 6.7 Z" fill="#8a8a8a"/></svg><i>修改金额</i></div>
<div class="b1" style="left:725.4px;top:369.32px;width:50.2px;height:12.8px"><svg width="8" height="7" viewBox="0 0 11.4 10"><path d="M6.8 1.2 H0.9 V9.2 H8.2 V5.4" fill="none" stroke="#8a8a8a" stroke-width="1.3"/><path d="M3.3 7 L3.7 5.1 L8.6 0.4 L10.4 2.1 L5.4 6.7 Z" fill="#8a8a8a"/></svg><i>修改银行卡</i></div>
<div class="b1" style="left:778.4px;top:369.32px;width:44.6px;height:12.8px"><svg width="8" height="7" viewBox="0 0 11.4 10"><path d="M6.8 1.2 H0.9 V9.2 H8.2 V5.4" fill="none" stroke="#8a8a8a" stroke-width="1.3"/><path d="M3.3 7 L3.7 5.1 L8.6 0.4 L10.4 2.1 L5.4 6.7 Z" fill="#8a8a8a"/></svg><i>追加金额</i></div>
<div class="b1" style="left:824.9px;top:369.32px;width:43.7px;height:12.8px"><svg style="vertical-align:0.4px" width="8" height="6" viewBox="0 0 11 8"><rect x="0.6" y="0.6" width="9.8" height="6.8" fill="none" stroke="#7a7a7a" stroke-width="1.2"/><rect x="0.6" y="0.6" width="9.8" height="3" fill="#7a7a7a"/></svg><i>查看合同</i></div>
<div class="vl" style="left:132.6px"></div>
<div class="vl" style="left:207.8px"></div>
<div class="vl" style="left:288.5px"></div>
<div class="vl" style="left:369.1px"></div>
<div class="vl" style="left:434.1px"></div>
<div class="vl" style="left:470.9px"></div>
<div class="vl" style="left:545.4px"></div>
<div class="vl" style="left:609.9px"></div>
<div class="vl" style="left:673.1px"></div>
<div class="a" id="pg"><i>共</i>49<i>条记录</i> | <i>第</i> 1 / 7 <i>页</i></div>
<div class="pb" style="left:600.6px;width:10.3px;background:#42a0e0;border-color:#42a0e0;color:#fff;font-weight:bold">1</div>
<div class="pb" style="left:612.2px;width:10.8px;">2</div>
<div class="pb" style="left:623.9px;width:10.7px;">3</div>
<div class="pb" style="left:635.5px;width:10.7px;">4</div>
<div class="pb" style="left:647.2px;width:10.7px;">5</div>
<div class="pb" style="left:660.2px;width:25.8px;"><i>下一页</i></div>
</body></html>
